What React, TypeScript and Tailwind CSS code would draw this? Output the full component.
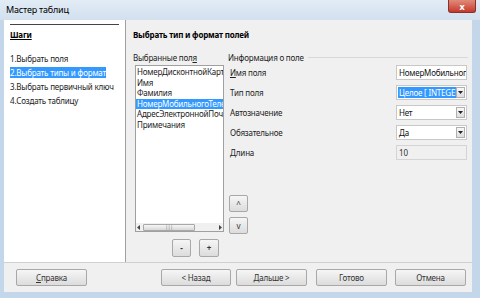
const FONT = "font-['Noto_Sans',sans-serif]";

const FIELDS = [
  'НомерДисконтнойКарты',
  'Имя',
  'Фамилия',
  'НомерМобильногоТелефона',
  'АдресЭлектроннойПочты',
  'Примечания',
];

const STEPS = [
  '1.Выбрать поля',
  '2.Выбрать типы и формат',
  '3.Выбрать первичный ключ',
  '4.Создать таблицу',
];

function Btn({ label, className = '' }: { label: React.ReactNode; className?: string }) {
  return (
    <div
      className={`flex items-center justify-center rounded-[2px] border border-[#a8a8a8] bg-gradient-to-b from-[#f6f6f6] to-[#dcdcdc] text-[8px] tracking-[-0.2px] text-[#333] ${className}`}
    >
      {label}
    </div>
  );
}

function Select({ value, selected = false }: { value: string; selected?: boolean }) {
  return (
    <div className="flex h-[15px] w-[71px] items-center border border-[#c8c8c8] bg-white">
      <div className="flex-1 overflow-hidden whitespace-nowrap pl-[1px]">
        <span className={selected ? 'bg-[#3399ff] px-[1px] text-white' : 'px-[1px] text-[#111]'}>{value}</span>
      </div>
      <div className="mr-[1px] flex h-[11px] w-[9px] items-center justify-center border border-[#b0b0b0] bg-gradient-to-b from-[#f8f8f8] to-[#dedede]">
        <svg width="5" height="3" viewBox="0 0 5 3">
          <path d="M0 0h5L2.5 3z" fill="#222" />
        </svg>
      </div>
    </div>
  );
}

export default function App() {
  return (
    <div className={`flex h-[298px] w-[480px] flex-col bg-[#c3d6ea] ${FONT}`}>
      {/* заголовок окна */}
      <div className="flex h-[20px] items-start justify-between bg-gradient-to-b from-[#e2ecf6] to-[#d2e0ee]">
        <div className="pl-[6px] pt-[4px] text-[9px] leading-[12px] tracking-[-0.2px] text-black">Мастер таблиц</div>
        <div className="mr-[4px] flex h-[13px] w-[28px] items-center justify-center rounded-b-[3px] border border-t-0 border-[#8a2e2e] bg-gradient-to-b from-[#e08a7a] to-[#c4372a]">
          <span className="text-[9px] font-bold leading-none text-white">x</span>
        </div>
      </div>

      <div className="mx-[4px] mb-[6px] flex w-[468px] flex-1 flex-col bg-[#f0f0f0] text-[8px] tracking-[-0.2px]">
        <div className="flex h-[242px]">
          {/* шаги */}
          <div className="w-[122px] border-r border-[#a0a0a0] bg-white px-[6px] pt-[4px]">
            <div className="h-[1px] bg-[#444]" />
            <div className="mt-[4px] font-bold leading-[12px] text-black underline">Шаги</div>
            <div className="mt-[11px] flex flex-col leading-[14px] text-[#222]">
              {STEPS.map((s, i) => (
                <div key={s} className="whitespace-nowrap">
                  <span className={i === 1 ? 'bg-[#3399ff] text-white' : ''}>{s}</span>
                </div>
              ))}
            </div>
          </div>

          {/* содержимое */}
          <div className="flex flex-1 flex-col pl-[7px] pt-[9px]">
            <div className="font-bold leading-[12px] text-black">Выбрать тип и формат полей</div>
            <div className="mt-[11px] flex">
              {/* выбранные поля */}
              <div className="flex w-[95px] flex-col">
                <div className="leading-[11px] text-[#222]">
                  Выбранные пол<span className="underline">я</span>
                </div>
                <div className="mt-[2px] ml-[2px] flex h-[167px] w-[89px] flex-col border border-[#a0a0a0] bg-white">
                  <div className="flex-1 overflow-hidden pt-[1px] leading-[10.6px] text-[#222]">
                    {FIELDS.map((f, i) => (
                      <div
                        key={f}
                        className={`whitespace-nowrap pl-[1px] ${i === 3 ? 'bg-[#3399ff] text-white' : ''}`}
                      >
                        {f}
                      </div>
                    ))}
                  </div>
                  <div className="flex h-[8px] items-center bg-[#f0f0f0] px-[1px]">
                    <svg width="3" height="5" viewBox="0 0 3 5">
                      <path d="M3 0v5L0 2.5z" fill="#444" />
                    </svg>
                    <div className="mx-[3px] flex h-[7px] w-[52px] items-center justify-center rounded-[1px] border border-[#a8a8a8] bg-gradient-to-b from-[#f6f6f6] to-[#d8d8d8]">
                      <span className="text-[5px] leading-none text-[#777]">|||</span>
                    </div>
                    <div className="flex-1" />
                    <svg width="3" height="5" viewBox="0 0 3 5">
                      <path d="M0 0v5L3 2.5z" fill="#444" />
                    </svg>
                  </div>
                </div>
                <div className="mt-[7px] flex gap-[8px] pl-[39px]">
                  <Btn label="-" className="h-[18px] w-[19px] font-bold" />
                  <Btn label="+" className="h-[18px] w-[20px] font-bold" />
                </div>
              </div>

              {/* информация о поле */}
              <div className="flex flex-1 flex-col">
                <div className="flex items-center gap-[4px] pr-[4px]">
                  <span className="leading-[11px] text-[#222]">Информация о поле</span>
                  <div className="h-[1px] flex-1 bg-[#d8d8d8]" />
                </div>
                <div className="mt-[2px] flex flex-col gap-[5px] pl-[2px] pr-[5px] text-[#222]">
                  <div className="flex h-[15px] items-center justify-between">
                    <span>
                      <span className="underline">И</span>мя поля
                    </span>
                    <div className="flex h-[15px] w-[71px] items-center overflow-hidden whitespace-nowrap border border-[#c8c8c8] bg-white pl-[2px] text-[#111]">
                      НомерМобильногоТелефона
                    </div>
                  </div>
                  <div className="flex h-[15px] items-center justify-between">
                    <span>Тип поля</span>
                    <Select value="Целое [ INTEGER ]" selected />
                  </div>
                  <div className="flex h-[15px] items-center justify-between">
                    <span>Автозначение</span>
                    <Select value="Нет" />
                  </div>
                  <div className="flex h-[15px] items-center justify-between">
                    <span>Обязательное</span>
                    <Select value="Да" />
                  </div>
                  <div className="flex h-[15px] items-center justify-between">
                    <span>Длина</span>
                    <div className="flex h-[15px] w-[71px] items-center border border-[#d4d4d4] bg-[#f0f0f0] pl-[2px] text-[#333]">
                      10
                    </div>
                  </div>
                </div>
                <div className="mt-[35px] flex flex-col gap-[5px] pl-[1px]">
                  <Btn label="^" className="h-[17px] w-[19px]" />
                  <Btn label="v" className="h-[17px] w-[19px]" />
                </div>
              </div>
            </div>
          </div>
        </div>

        <div className="h-[1px] bg-[#d0d0d0]" />

        {/* кнопки */}
        <div className="flex items-start pt-[6px] pl-[12px]">
          <Btn label={<span><span className="underline">С</span>правка</span>} className="h-[17px] w-[71px]" />
          <Btn label="< Назад" className="ml-[74px] h-[17px] w-[70px]" />
          <Btn label="Дальше >" className="ml-[5px] h-[17px] w-[71px] border-[#5a9fd0]" />
          <Btn label="Готово" className="ml-[9px] h-[17px] w-[71px]" />
          <Btn label="Отмена" className="ml-[8px] h-[17px] w-[71px]" />
        </div>
      </div>
    </div>
  );
}
